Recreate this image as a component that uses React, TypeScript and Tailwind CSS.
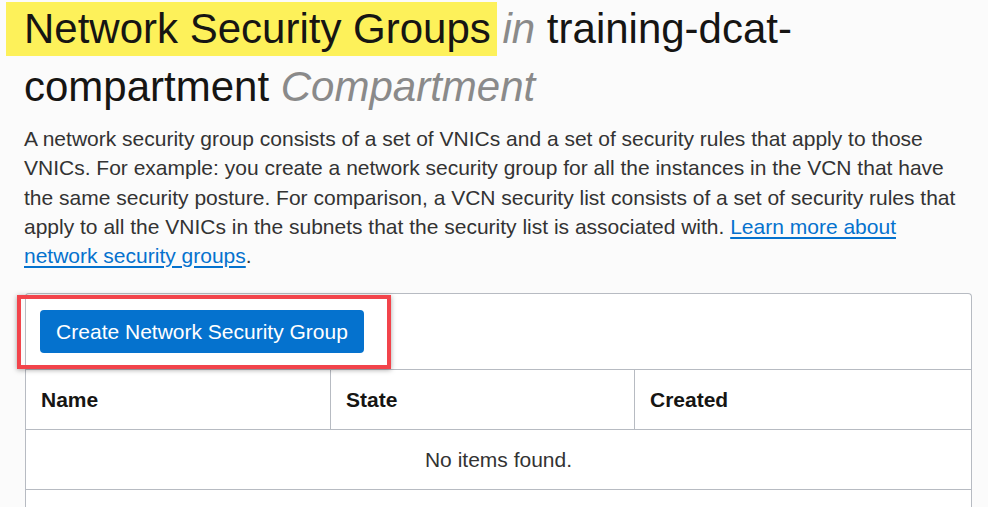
import React from "react";

const columns = ["Name", "State", "Created"];

const App = () => {
  return (
    <div className="min-h-[507px] overflow-hidden bg-[#fbfbfb] font-['Liberation_Sans',Arial,sans-serif] text-[#161513]">
      <div className="pl-6 pr-4">
        {/* Title */}
        <h1 className="text-[42px] font-normal leading-[58px]">
          <span className="-ml-[18px] -mr-[6px] bg-[#fdf15a] pb-[4px] pl-[18px] pr-[6px] pt-[3px]">
            Network Security Groups
          </span>{" "}
          <i className="text-[#8a8a8a]">in</i> training-dcat-compartment{" "}
          <i className="text-[#8a8a8a]">Compartment</i>
        </h1>

        <p className="mt-[8px] w-[945px] text-[21px] leading-[29.25px] text-[#333333]">
          A network security group consists of a set of VNICs and a set of
          security rules that apply to those VNICs. For example: you create a
          network security group for all the instances in the VCN that have the
          same security posture. For comparison, a VCN security list consists of
          a set of security rules that apply to all the VNICs in the subnets that
          the security list is associated with.{" "}
          <a href="#" className="text-[#0572ce] underline underline-offset-[3px]">
            Learn more about network security groups
          </a>
          .
        </p>

        {/* Table card */}
        <div className="relative ml-px mt-[23px] w-[947px] rounded-t-[4px] border border-b-0 border-[#b7bbc2] bg-white">
          <div className="flex h-[76px] items-center border-b border-[#b7bbc2] pl-[14px]">
            <button
              type="button"
              className="h-[43px] w-[324px] rounded-[4px] bg-[#0572ce] text-[21px] text-white"
            >
              Create Network Security Group
            </button>
          </div>

          {/* annotation box */}
          <div className="pointer-events-none absolute -left-[9px] top-[1px] h-[74px] w-[374px] border-[4px] border-[#f2444b] shadow-[0_1px_5px_rgba(0,0,0,0.35)]" />

          <div className="grid grid-cols-[305px_304px_1fr] border-b border-[#b7bbc2]">
            {columns.map((col, i) => (
              <div
                key={col}
                className={`flex h-[59px] items-center pl-[15px] text-[21px] font-bold ${
                  i < 2 ? "border-r border-[#b7bbc2]" : ""
                }`}
              >
                {col}
              </div>
            ))}
          </div>

          <div className="flex h-[60px] items-center justify-center border-b border-[#b7bbc2] text-[21px] text-[#333333]">
            No items found.
          </div>
          <div className="h-[40px]" />
        </div>
      </div>
    </div>
  );
};

export default App;
